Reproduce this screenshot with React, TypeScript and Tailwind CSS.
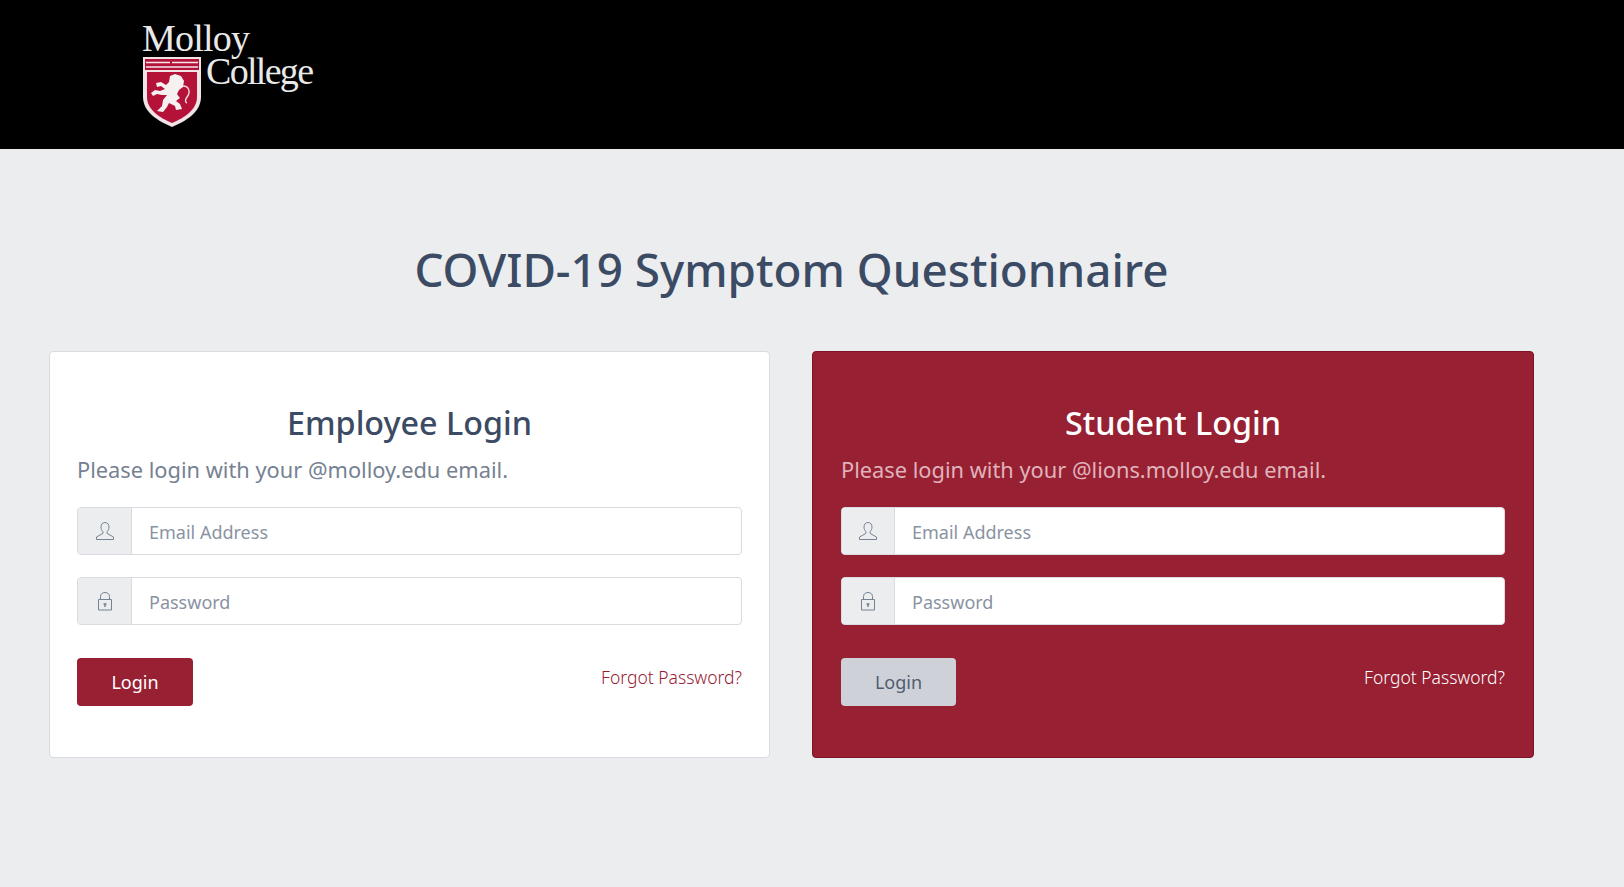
const font = "font-['Noto_Sans','Open_Sans',sans-serif]";

function Shield() {
  return (
    <svg width="60" height="72" viewBox="0 0 60 72" className="block">
      <path d="M1 1H59V41C59 56 44 65 30 71C16 65 1 56 1 41Z" fill="#f1e4e6" />
      <path d="M3 3H57V14H3Z" fill="#b5123a" />
      <path d="M4 6.5H56M4 11H56" stroke="#f4e8ea" strokeWidth="1.5" />
      <path d="M29 4V9" stroke="#b5123a" strokeWidth="2" />
      <path d="M5 16H55V41C55 54 42 62 30 67C18 62 5 54 5 41Z" fill="#b5123a" />
      {/* lion */}
      <path
        d="M28 20L33 18L39 20L42 25L41 31L37 34L35 38L38 42L34 45L38 48L40 53L34 54L33 50L27 47L25 51L21 56L15 55L20 50L21 44L25 39L20 39L15 38L11 40L9 37L13 34L18 35L23 33L19 30L15 31L14 27L19 26L24 29L27 26Z"
        fill="#f7f0f0"
      />
      <path d="M41 30C47 30 49 36 45 41C43 44 43 46 45 47" stroke="#f0d6da" strokeWidth="1.4" fill="none" />
    </svg>
  );
}

function Logo() {
  return (
    <div className="ml-[142px] mt-[20px] w-[172px] h-[108px] font-['Liberation_Serif',serif] text-[#e9e9e9]">
      <div className="text-[38px] leading-[36px] tracking-[-0.8px] h-[36px]">Molloy</div>
      <div className="flex items-start">
        <Shield />
        <div className="text-[38px] leading-[36px] tracking-[-1.7px] ml-[4px] -mt-[3px]">College</div>
      </div>
    </div>
  );
}

function UserIcon() {
  return (
    <svg width="20" height="20" viewBox="0 0 20 20" fill="none" stroke="#768192" strokeWidth="1">
      <path d="M10 1.5C7.5 1.5 6 3.4 6 6C6 8 6.8 9.6 7.9 10.6V12.4L1.5 16V18.5H18.5V16L12.1 12.4V10.6C13.2 9.6 14 8 14 6C14 3.4 12.5 1.5 10 1.5Z" />
    </svg>
  );
}

function LockIcon() {
  return (
    <svg width="20" height="20" viewBox="0 0 20 20" fill="none" stroke="#768192" strokeWidth="1">
      <path d="M3.5 8.5H16.5V19H3.5Z" />
      <path d="M5.5 8.5V5.5C5.5 3 7.5 1.5 10 1.5C12.5 1.5 14.5 3 14.5 5.5V8.5" />
      <path d="M8.5 13H11.5M10 13V16" strokeWidth="1.5" />
    </svg>
  );
}

function Field({
  icon,
  placeholder,
  type,
  dark,
}: {
  icon: React.ReactNode;
  placeholder: string;
  type: string;
  dark?: boolean;
}) {
  return (
    <div className="flex h-12 rounded-[4px] border border-[#d8dbe0] bg-white overflow-hidden">
      <span
        className={`flex ${dark ? "w-[53px]" : "w-[54px]"} shrink-0 items-center justify-center bg-[#ebedef] border-r border-[#d8dbe0]`}
      >
        {icon}
      </span>
      <input
        type={type}
        placeholder={placeholder}
        className={`${font} min-w-0 flex-1 pl-[17px] pt-[2px] text-[18px] text-[#3c4b64] outline-none placeholder:text-[#8a93a2]`}
      />
    </div>
  );
}

function LoginCard({
  title,
  domain,
  dark,
}: {
  title: string;
  domain: string;
  dark?: boolean;
}) {
  return (
    <div
      className={
        dark
          ? "w-[722px] h-[407px] rounded-[4px] border border-[#7a1426] bg-[#972033] px-[28px] pt-[50px]"
          : "w-[721px] h-[407px] rounded-[4px] border border-[#d8dbe0] bg-white px-[27px] pt-[50px]"
      }
    >
      <h2 className={`text-center text-[32.3px] leading-[40px] font-medium ${dark ? "text-white" : "text-[#3c4b64]"}`}>
        {title}
      </h2>
      <p className={`mt-[13px] text-[21.8px] leading-[30px] ${dark ? "text-[#e0b3bb]" : "text-[#768192]"}`}>
        Please login with your {domain} email.
      </p>
      <div className="mt-[22px] flex flex-col gap-[22px]">
        <Field icon={<UserIcon />} placeholder="Email Address" type="email" dark={dark} />
        <Field icon={<LockIcon />} placeholder="Password" type="password" dark={dark} />
      </div>
      <div className="mt-[33px] flex items-start justify-between">
        <button
          className={
            dark
              ? "h-12 w-[115px] rounded-[4px] bg-[#ced2d8] text-[18px] text-[#4f5d73]"
              : "h-12 w-[116px] rounded-[4px] bg-[#972033] text-[18px] text-white"
          }
        >
          Login
        </button>
        <a className={`mt-[4px] text-[17.5px] leading-[30px] font-light ${dark ? "text-white" : "text-[#972033]"}`}>
          Forgot Password?
        </a>
      </div>
    </div>
  );
}

export default function App() {
  return (
    <div className={`${font} min-h-[887px] bg-[#ebedef]`}>
      <header className="h-[149px] bg-black overflow-hidden">
        <Logo />
      </header>
      <main className="w-[1485px] ml-[49px]">
        <h1 className="mt-[88px] text-center text-[45.8px] leading-[64px] font-medium text-[#3c4b64]">
          COVID-19 Symptom Questionnaire
        </h1>
        <div className="mt-[50px] flex justify-between">
          <LoginCard title="Employee Login" domain="@molloy.edu" />
          <LoginCard title="Student Login" domain="@lions.molloy.edu" dark />
        </div>
      </main>
    </div>
  );
}
